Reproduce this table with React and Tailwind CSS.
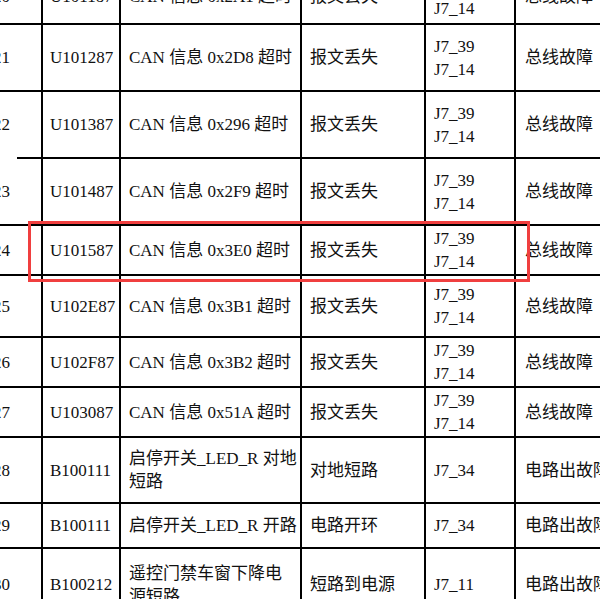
import React from "react";

const rows = [
  ["20", "U101187", ["CAN 信息 0x2A1 超时"], "报文丢失", ["J7_39", "J7_14"], "总线故障"],
  ["21", "U101287", ["CAN 信息 0x2D8 超时"], "报文丢失", ["J7_39", "J7_14"], "总线故障"],
  ["22", "U101387", ["CAN 信息 0x296 超时"], "报文丢失", ["J7_39", "J7_14"], "总线故障"],
  ["23", "U101487", ["CAN 信息 0x2F9 超时"], "报文丢失", ["J7_39", "J7_14"], "总线故障"],
  ["24", "U101587", ["CAN 信息 0x3E0 超时"], "报文丢失", ["J7_39", "J7_14"], "总线故障"],
  ["25", "U102E87", ["CAN 信息 0x3B1 超时"], "报文丢失", ["J7_39", "J7_14"], "总线故障"],
  ["26", "U102F87", ["CAN 信息 0x3B2 超时"], "报文丢失", ["J7_39", "J7_14"], "总线故障"],
  ["27", "U103087", ["CAN 信息 0x51A 超时"], "报文丢失", ["J7_39", "J7_14"], "总线故障"],
  ["28", "B100111", ["启停开关_LED_R 对地", "短路"], "对地短路", ["J7_34"], "电路出故障"],
  ["29", "B100111", ["启停开关_LED_R 开路"], "电路开环", ["J7_34"], "电路出故障"],
  ["30", "B100212", ["遥控门禁车窗下降电", "源短路"], "短路到电源", ["J7_11"], "电路出故障"],
];

function Lines({ items }) {
  return (
    <div className="flex flex-col">
      {items.map((t, i) => (
        <span key={i} className="whitespace-nowrap">
          {t}
        </span>
      ))}
    </div>
  );
}

export default function App() {
  return (
    <div
      className="relative w-[600px] h-[599px] overflow-hidden bg-white text-[17px] leading-[23px] text-[#111111]"
      style={{ fontFamily: '"Liberation Serif", "Noto Sans CJK SC", serif' }}
    >
      <div className="-ml-[20px] -mt-[30px] grid w-[656px] grid-cols-[61px_76px_179px_122px_88px_120px] grid-rows-[53px_65px_65px_65px_48px_60px_48px_48px_64px_43px_71px] gap-[2px] bg-black">
        {rows.map((r, i) => (
          <React.Fragment key={i}>
            <div className="flex items-center justify-end bg-white pr-[31px] whitespace-nowrap">
              {r[0]}
            </div>
            <div className="flex items-center bg-white pl-[7px] whitespace-nowrap">
              {r[1]}
            </div>
            <div className="flex items-center bg-white pl-[8px]">
              <Lines items={r[2]} />
            </div>
            <div className="flex items-center bg-white pl-[8px] whitespace-nowrap">
              {r[3]}
            </div>
            <div className="flex items-center bg-white pl-[8px]">
              <Lines items={r[4]} />
            </div>
            <div className="flex items-center bg-white pl-[9px] whitespace-nowrap">
              {r[5]}
            </div>
          </React.Fragment>
        ))}
      </div>
      <div className="pointer-events-none absolute left-0 top-[157px] h-[2px] w-[17px] bg-white" />
      <div className="pointer-events-none absolute left-[28px] top-[221px] h-[61px] w-[502px] border-[3px] border-[#f03f3f]" />
    </div>
  );
}
